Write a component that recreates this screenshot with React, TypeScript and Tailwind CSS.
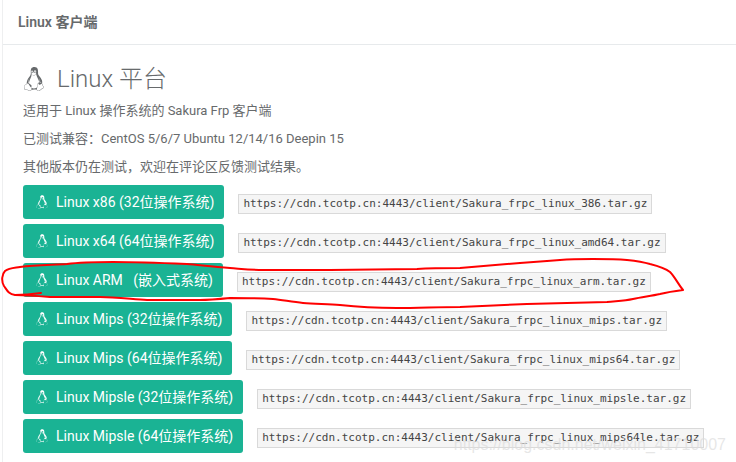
import { FaLinux } from "react-icons/fa";

type Client = {
  label: string;
  file: string;
};

const BASE_URL = "https://cdn.tcotp.cn:4443/client/";

const clients: Client[] = [
  { label: "Linux x86 (32位操作系统)", file: "Sakura_frpc_linux_386.tar.gz" },
  { label: "Linux x64 (64位操作系统)", file: "Sakura_frpc_linux_amd64.tar.gz" },
  { label: "Linux ARM   (嵌入式系统)", file: "Sakura_frpc_linux_arm.tar.gz" },
  { label: "Linux Mips (32位操作系统)", file: "Sakura_frpc_linux_mips.tar.gz" },
  { label: "Linux Mips (64位操作系统)", file: "Sakura_frpc_linux_mips64.tar.gz" },
  { label: "Linux Mipsle (32位操作系统)", file: "Sakura_frpc_linux_mipsle.tar.gz" },
  { label: "Linux Mipsle (64位操作系统)", file: "Sakura_frpc_linux_mips64le.tar.gz" },
];

function ClientRow({ label, file }: Client) {
  return (
    <li className="flex items-start gap-[14px]">
      <a
        href={BASE_URL + file}
        className="flex h-[34px] items-center gap-2 rounded-[3px] bg-[#1ab394] pr-[10px] pl-[13px] text-sm whitespace-pre text-white"
      >
        <FaLinux className="h-[14px] w-3" />
        {label}
      </a>
      <code className="mt-[9px] h-5 border border-[#d9d9d9] bg-[#f5f5f5] px-1 font-['DejaVu_Sans_Mono',monospace] text-[11px] leading-[18px] whitespace-nowrap text-[#444]">
        {BASE_URL + file}
      </code>
    </li>
  );
}

export default function App() {
  return (
    <div className="relative overflow-hidden bg-white pl-[2px] font-[Roboto,'Noto_Sans_CJK_SC',sans-serif] text-[13px] text-[#676a6c]">
      <section className="border-l border-[#eeeff0]">
        <header className="border-b border-[#e7eaec] px-[15px] pt-3 pb-3">
          <h5 className="text-sm leading-5 font-semibold">Linux 客户端</h5>
        </header>

        <div className="px-5 pt-[18px] pb-3">
          <h1 className="flex items-center gap-3 text-2xl leading-8 font-light">
            <FaLinux className="h-6 w-[22px]" />
            Linux 平台
          </h1>
          <div className="mt-[6px] flex flex-col gap-2 leading-5">
            <p>适用于 Linux 操作系统的 Sakura Frp 客户端</p>
            <p>已测试兼容：CentOS 5/6/7 Ubuntu 12/14/16 Deepin 15</p>
            <p>其他版本仍在测试，欢迎在评论区反馈测试结果。</p>
          </div>
          <ul className="mt-2 flex flex-col gap-[5px]">
            {clients.map((client) => (
              <ClientRow key={client.file} label={client.label} file={client.file} />
            ))}
          </ul>
        </div>
      </section>

      {/* hand-drawn mark around the ARM build */}
      <svg
        className="pointer-events-none absolute top-[250px] left-0"
        width="700"
        height="65"
        viewBox="0 250 700 65"
        fill="none"
        stroke="#ff0000"
        strokeWidth="2"
        strokeLinejoin="round"
        strokeLinecap="round"
        aria-hidden="true"
      >
        <path d="M41 293C34 294 25 295 15 295C8 294 7 290 4 286C1 281 2 274 5 271C9 268 14 268 20 267C35 265 50 265 67 264C82 262 97 262 113 262C138 262 163 263 187 264C200 265 212 267 230 268C243 269 252 270 263 270L330 270L417 269C432 268 446 268 460 268L520 263C535 262 547 261 560 260C572 259 582 259 593 259C605 259 616 259 627 260C636 261 643 262 650 264C658 266 665 268 670 272C675 277 678 284 683 290C675 291 668 292 660 294C651 296 642 297 633 299C624 301 615 301 607 302L527 304L460 307C439 307 418 308 397 308C377 308 358 307 340 305C328 304 315 304 303 303C292 302 283 300 273 299C258 298 243 298 230 298C220 299 210 300 200 300L147 300C131 299 115 297 100 297L50 297C38 296 26 295 15 295" />
      </svg>

      <span className="pointer-events-none absolute top-[433px] right-[10px] font-['Liberation_Sans',sans-serif] text-base leading-6 whitespace-nowrap text-[#dcdcdc]/70">
        https://blog.csdn.net/weixin_41710007
      </span>
    </div>
  );
}
